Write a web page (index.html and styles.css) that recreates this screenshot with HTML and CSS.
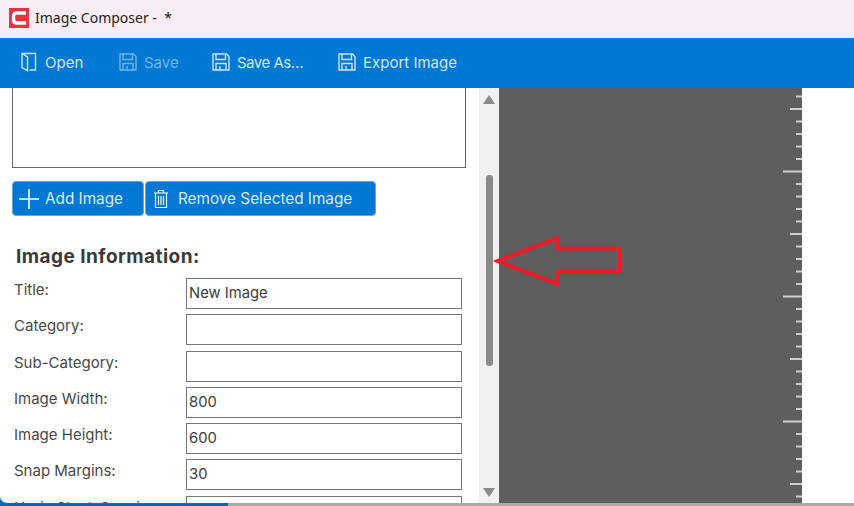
FILE: index.html
```html
<!DOCTYPE html>
<html lang="en">
<head>
<meta charset="utf-8">
<title>Image Composer</title>
<link rel="stylesheet" href="styles.css">
</head>
<body>
<div class="window">
  <header class="titlebar">
    <svg class="app-logo" viewBox="0 0 20 20" width="20" height="20"><rect width="20" height="20" fill="#e2353f"/><path d="M17 5H8Q4.500 5 4.500 8V12Q4.500 15 8 15H17" fill="none" stroke="#fff" stroke-width="3.400"/></svg>
    <span class="app-title">Image Composer -&nbsp; *</span>
  </header>
  <nav class="toolbar">
    <button class="tool tool-open"><svg class="tool-icon" viewBox="0 0 18 20" width="18" height="20"><path d="M2 1.500H15.500V18H9.500M2 1.500V15.500L7.500 18.500V5L2 1.500Z" fill="none" stroke="#cfe4f7" stroke-width="1.400"/></svg>Open</button>
    <button class="tool tool-save is-disabled"><svg class="tool-icon" viewBox="0 0 18 18" width="18" height="18"><use href="#disk"/></svg>Save</button>
    <button class="tool tool-saveas"><svg class="tool-icon" viewBox="0 0 18 18" width="18" height="18"><use href="#disk"/></svg>Save As…</button>
    <button class="tool tool-export"><svg class="tool-icon" viewBox="0 0 18 18" width="18" height="18"><use href="#disk"/></svg>Export Image</button>
  </nav>
  <main class="content">
    <section class="pane">
      <div class="image-list"></div>
      <div class="buttons">
        <button class="action action-add"><svg viewBox="0 0 20 20" width="20" height="20"><path d="M10 0V20M0 10H20" stroke="#fff" stroke-width="1.600"/></svg>Add Image</button>
        <button class="action action-remove"><svg viewBox="0 0 16 20" width="16" height="20"><path d="M1 4H15M5.500 4V1.500H10.500V4M2.500 4V18.500H13.500V4M5.500 7V16M8 7V16M10.500 7V16" fill="none" stroke="#fff" stroke-width="1.200"/></svg>Remove Selected Image</button>
      </div>
      <h2 class="section-title">Image Information:</h2>
      <div class="form">
        <label class="label">Title:</label><div class="field">New Image</div>
        <label class="label">Category:</label><div class="field"></div>
        <label class="label">Sub-Category:</label><div class="field"></div>
        <label class="label">Image Width:</label><div class="field">800</div>
        <label class="label">Image Height:</label><div class="field">600</div>
        <label class="label">Snap Margins:</label><div class="field">30</div>
        <label class="label">Horiz Stack Spacing:</label><div class="field"></div>
      </div>
    </section>
    <aside class="scrollbar">
      <span class="arrow-up"></span>
      <span class="thumb"></span>
      <span class="arrow-down"></span>
    </aside>
    <section class="canvas">
      <svg class="ruler" id="ruler" width="20" height="415" viewBox="0 0 20 415"></svg>
    </section>
  </main>
  <div class="bottom-edge"><span class="edge-blue"></span><span class="edge-gray"></span></div>
  <svg class="annotation" viewBox="0 0 130 54" width="130" height="54"><path d="M3.500 26 64 3V13.500H126V37H64V49Z" fill="none" stroke="#ec1c2b" stroke-width="4" stroke-linejoin="miter"/></svg>
</div>
<svg class="defs" width="0" height="0"><defs><g id="disk" fill="none" stroke="#cfe4f7" stroke-width="1.400"><path d="M1 1H14.500L17 3.500V17H1Z"/><path d="M4 1V6.500H13.500V1M4 17V10.500H14V17M8 13V17"/></g></defs></svg>
<script src="ruler.js"></script>
</body>
</html>
```
FILE: styles.css
```css
* { box-sizing: border-box; }
html, body { margin: 0; padding: 0; }
body { width: 854px; height: 506px; overflow: hidden; background: #fff; font-family: Inter, "Noto Sans", sans-serif; }
.window { position: relative; width: 854px; height: 506px; display: flex; flex-direction: column; overflow: hidden; background: #0067c0; }
.defs { display: block; position: absolute; }

.titlebar { flex: 0 0 38px; display: flex; align-items: center; gap: 6px; padding: 0 0 3px 9px; background: #f8edf5; }
.app-title { font-family: "Noto Sans", sans-serif; font-size: 14px; color: #222; }

.toolbar { flex: 0 0 50px; display: flex; align-items: center; background: #0078d4; padding: 0 0 2px 20px; }
.tool { display: flex; align-items: center; gap: 7px; padding: 0; border: 0; background: none; color: #d4e7f8; font: inherit; font-size: 15px; }
.tool-icon { flex: none; }
.tool-open { width: 99px; }
.tool-save { width: 93px; }
.tool-saveas { width: 126px; letter-spacing: -.5px; }
.is-disabled { opacity: .55; }

.content { flex: 1 1 0; min-height: 0; display: flex; background: #fff; border-bottom-left-radius: 7px; overflow: hidden; }
.pane { flex: 0 0 479px; overflow: hidden; padding-left: 12px; }
.image-list { width: 454px; height: 80px; border: 1px solid #666; border-top: 0; }
.buttons { display: flex; margin: 13px 0 0; gap: 1px; }
.action { height: 35px; display: flex; align-items: center; padding: 0; border: 1px solid #5fa8e3; border-radius: 4px; background: #0078d4; color: #dcecfa; font: inherit; font-size: 15.300px; }
.action-add { width: 132px; gap: 6px; padding-left: 6px; }
.action-remove { width: 231px; gap: 9px; padding-left: 7px; }

.section-title { margin: 29px 0 0 4px; font-size: 19px; line-height: 24px; font-weight: 700; letter-spacing: .45px; color: #3a3a3a; }
.form { display: grid; grid-template-columns: 172px 276px; grid-auto-rows: 31px; row-gap: 5.300px; margin: 9px 0 0 2px; }
.label { font-size: 15px; line-height: 23px; color: #484848; }
.field { height: 31px; border: 1px solid #777; padding: 4px 2px; font-size: 14.800px; line-height: 21px; color: #3c3c3c; }

.scrollbar { flex: 0 0 20px; position: relative; display: flex; flex-direction: column; align-items: center; background: #f0f0f0; }
.arrow-up { margin-top: 7px; border: 6px solid transparent; border-top: 0; border-bottom: 9px solid #8a8a8a; }
.thumb { width: 7px; height: 191px; margin-top: 71px; border-radius: 3px; background: #8a8a8a; }
.arrow-down { margin-top: auto; margin-bottom: 6px; border: 6px solid transparent; border-bottom: 0; border-top: 9px solid #8a8a8a; }

.canvas { flex: 0 0 303px; display: flex; justify-content: flex-end; background: #5e5e5e; }
.ruler { display: block; flex: none; }

.bottom-edge { flex: 0 0 3px; display: flex; }
.edge-blue { flex: 0 0 228px; background: #0067c0; }
.edge-gray { flex: 1 1 0; background: #a9a9a9; }
.annotation { position: absolute; left: 494px; top: 235px; }
```
FILE: ruler.js
```js
var svg = document.getElementById('ruler');
var markup = '';
for (var i = 0; i < 33; i++) {
  var n = i % 10;
  var len = n === 6 ? 19 : n === 1 ? 12 : 6;
  var y = 8.5 + i * 12.5;
  markup += '<line x1="' + (20 - len) + '" x2="20" y1="' + y + '" y2="' + y + '" stroke="#cfcfcf" stroke-width="2"/>';
}
svg.innerHTML = markup;
```
